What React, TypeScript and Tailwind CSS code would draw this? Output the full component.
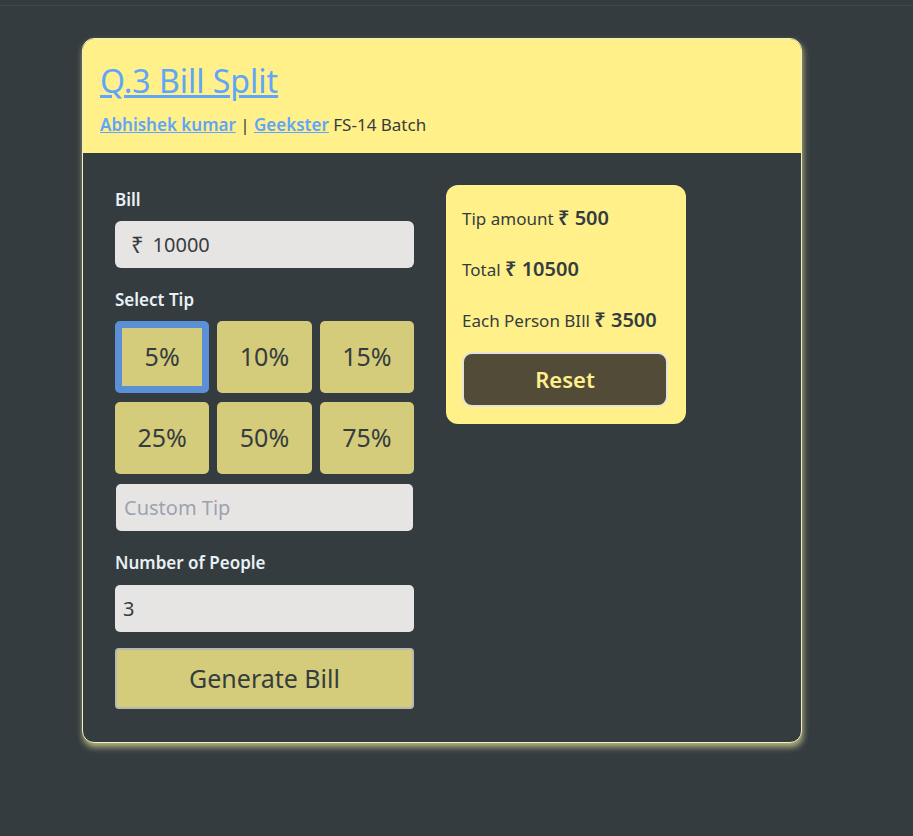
import { useState } from "react";

const tips = [5, 10, 15, 25, 50, 75];

export default function App() {
  const [tip, setTip] = useState(5);

  return (
    <div
      className="min-h-[836px] bg-[#353c40] pt-[5px]"
      style={{ fontFamily: '"Noto Sans", "Open Sans", sans-serif' }}
    >
      <div className="border-t border-[#41484b] pt-[32px] pl-[82px]">
        <div className="w-[720px] rounded-[12px] bg-[#353c40] border border-[#f3f0c0] shadow-[1px_4px_6px_rgba(240,235,160,0.7)] overflow-hidden">
          <div className="bg-[#fff08a] px-[17px] pt-[22px] pb-[16px]">
            <a href="#" className="text-[32px] leading-[40px] text-[#60a5fa] underline">
              Q.3 Bill Split
            </a>
            <p className="mt-[12px] text-[17px] leading-[24px] text-[#353c40]">
              <a href="#" className="font-semibold text-[#60a5fa] underline">Abhishek kumar</a> |{" "}
              <a href="#" className="font-semibold text-[#60a5fa] underline">Geekster</a> FS-14 Batch
            </p>
          </div>

          <div className="flex items-start gap-[32px] px-[32px] pt-[32px] pb-[33px]">
            <div className="w-[299px]">
              <label className="block text-[17px] font-semibold text-[#e8f1f5] leading-[22px] mt-[4px]">Bill</label>
              <div className="mt-[10px] h-[47px] rounded-[6px] bg-[#e7e5e4] flex items-center pl-[16px] text-[20px] text-[#353c40]">
                <span className="mr-[9px] text-[22px]">₹</span>10000
              </div>

              <label className="block mt-[21px] text-[17px] font-semibold text-[#e8f1f5] leading-[22px]">Select Tip</label>
              <div className="mt-[10px] grid grid-cols-3 gap-x-[8px] gap-y-[9px]">
                {tips.map((t) => (
                  <button
                    key={t}
                    type="button"
                    onClick={() => setTip(t)}
                    className={
                      tip === t
                        ? "h-[72px] rounded-[5px] bg-[#d4cc7a] border-[7px] border-[#5b8fd6] text-[25px] text-[#353c40]"
                        : "h-[72px] rounded-[5px] bg-[#d4cc7a] text-[25px] text-[#353c40]"
                    }
                  >
                    {t}%
                  </button>
                ))}
              </div>

              <input
                placeholder="Custom Tip"
                className="mt-[10px] ml-[1px] w-[297px] h-[47px] rounded-[5px] bg-[#e7e5e4] px-[8px] text-[20px] text-[#353c40] placeholder:text-[#9ca3af] outline-none"
              />

              <label className="block mt-[21px] text-[17px] font-semibold text-[#e8f1f5] leading-[22px]">Number of People</label>
              <div className="mt-[11px] h-[47px] rounded-[5px] bg-[#e7e5e4] flex items-center pl-[8px] text-[20px] text-[#353c40]">
                3
              </div>

              <button
                type="button"
                className="mt-[16px] w-full h-[61px] rounded-[4px] bg-[#d4cc7a] border-2 border-[#b9b9b2] text-[25px] text-[#353c40]"
              >
                Generate Bill
              </button>
            </div>

            <div className="w-[240px] rounded-[12px] bg-[#fff08a] px-[16px] pt-[19px] pb-[17px] text-[#353c40]">
              <p className="text-[17px] leading-[28px]">
                Tip amount <span className="text-[20px] font-semibold">₹ 500</span>
              </p>
              <p className="mt-[22px] text-[17px] leading-[28px]">
                Total <span className="text-[20px] font-semibold">₹ 10500</span>
              </p>
              <p className="mt-[22px] text-[17px] leading-[28px]">
                Each Person BIll <span className="text-[20px] font-semibold">₹ 3500</span>
              </p>
              <button
                type="button"
                className="mt-[17px] w-[206px] h-[55px] rounded-[10px] bg-[#524b38] border-2 border-[#e5e3d8] text-[22px] font-semibold text-[#fff08a]"
              >
                Reset
              </button>
            </div>
          </div>
        </div>
      </div>
    </div>
  );
}
